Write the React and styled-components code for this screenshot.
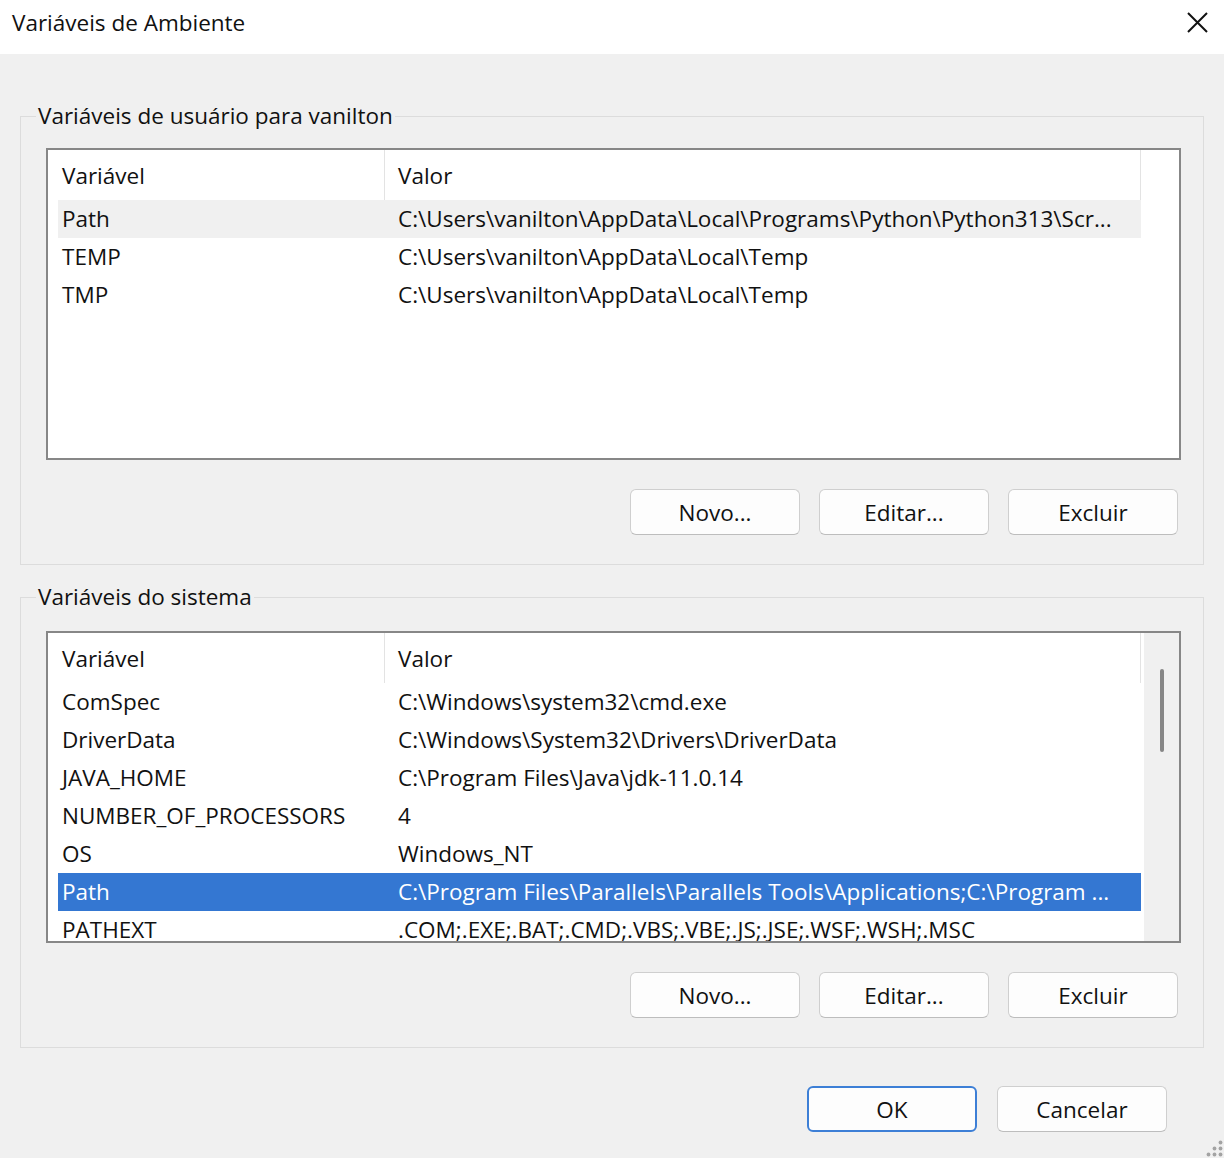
import React from 'react';
import styled, { createGlobalStyle } from 'styled-components';

const FONT = `"Open Sans", "Noto Sans", "Liberation Sans", sans-serif`;
const FS = '22.5px';
const INK = '#111111';

const GlobalStyle = createGlobalStyle`
  html, body { margin: 0; padding: 0; }
  body { background: #f0f0f0; font-family: ${FONT}; color: ${INK}; }
  * { box-sizing: border-box; }
`;

const Window = styled.div`
  position: relative;
  width: 1224px;
  height: 1158px;
  background: #f0f0f0;
  display: flex;
  flex-direction: column;
  overflow: hidden;
`;

const TitleBar = styled.div`
  height: 54px;
  flex-shrink: 0;
  background: #ffffff;
  display: flex;
  align-items: flex-start;
  justify-content: space-between;
  padding: 0 16px 0 12px;
`;

const Title = styled.div`
  font-size: ${FS};
  line-height: 30px;
  margin-top: 8px;
`;

const CloseButton = styled.button`
  margin-top: 12px;
  width: 21px;
  height: 21px;
  padding: 0;
  border: none;
  background: transparent;
  display: flex;
  color: ${INK};
`;

const Content = styled.div`
  flex: 1;
  display: flex;
  flex-direction: column;
  padding: 47px 20px 0 20px;
`;

const Group = styled.fieldset`
  margin: ${(p) => (p.$first ? '0' : '17px 0 0 0')};
  padding: ${(p) => (p.$first ? '17px' : '19px')} 22px 29px 25px;
  border: 1px solid #dcdcdc;
  min-width: 0;
  display: flex;
  flex-direction: column;
  gap: 29px;
`;

const Legend = styled.legend`
  font-size: ${FS};
  line-height: 30px;
  padding: 0 2px;
  margin-left: -10px;
`;

const ListBox = styled.div`
  height: 312px;
  border: 2px solid #878787;
  background: #ffffff;
  display: flex;
  overflow: hidden;
`;

const ListView = styled.div`
  flex: 1;
  min-width: 0;
  padding-left: 10px;
  display: flex;
  flex-direction: column;
  overflow: hidden;
`;

const HeaderRow = styled.div`
  width: 1083px;
  height: 50px;
  flex-shrink: 0;
  display: grid;
  grid-template-columns: 327px 1fr;
  border-right: 1px solid #e3e3e3;
`;

const HeaderCell = styled.div`
  display: flex;
  align-items: center;
  font-size: ${FS};
  padding-left: ${(p) => (p.$second ? '13px' : '4px')};
  border-right: ${(p) => (p.$second ? 'none' : '1px solid #e3e3e3')};
`;

const Row = styled.div`
  width: 1083px;
  height: 38px;
  flex-shrink: 0;
  display: grid;
  grid-template-columns: 327px 1fr;
  align-items: center;
  background: ${(p) => (p.$selected ? '#3477d2' : p.$hover ? '#f0f0f0' : 'transparent')};
  color: ${(p) => (p.$selected ? '#ffffff' : INK)};
`;

const Cell = styled.div`
  font-size: ${FS};
  line-height: 38px;
  white-space: nowrap;
  overflow: hidden;
  text-overflow: ellipsis;
  padding-left: ${(p) => (p.$second ? '13px' : '4px')};
`;

const ScrollTrack = styled.div`
  width: 35px;
  flex-shrink: 0;
  background: #f0f0f0;
  display: flex;
  flex-direction: column;
  align-items: center;
  padding-top: 36px;
`;

const ScrollThumb = styled.div`
  width: 4px;
  height: 83px;
  border-radius: 2px;
  background: #868686;
`;

const ButtonRow = styled.div`
  display: flex;
  justify-content: flex-end;
  gap: 19px;
  padding-right: 3px;
`;

const Button = styled.button`
  width: 170px;
  height: 46px;
  border-radius: 6px;
  background: #fdfdfd;
  border: ${(p) => (p.$default ? '2px solid #3d7fd6' : '1px solid #cfcfcf')};
  border-bottom-color: ${(p) => (p.$default ? '#3d7fd6' : '#bdbdbd')};
  font-family: ${FONT};
  font-size: ${FS};
  color: ${INK};
  padding: 0;
  display: flex;
  align-items: center;
  justify-content: center;
`;

const Footer = styled.div`
  display: flex;
  justify-content: flex-end;
  gap: 20px;
  padding: 38px 37px 0 0;
`;

const Grip = styled.svg`
  position: absolute;
  right: 1px;
  bottom: 1px;
`;

const userVars = [
  ['Path', 'C:\\Users\\vanilton\\AppData\\Local\\Programs\\Python\\Python313\\Scr...'],
  ['TEMP', 'C:\\Users\\vanilton\\AppData\\Local\\Temp'],
  ['TMP', 'C:\\Users\\vanilton\\AppData\\Local\\Temp'],
];

const sysVars = [
  ['ComSpec', 'C:\\Windows\\system32\\cmd.exe'],
  ['DriverData', 'C:\\Windows\\System32\\Drivers\\DriverData'],
  ['JAVA_HOME', 'C:\\Program Files\\Java\\jdk-11.0.14'],
  ['NUMBER_OF_PROCESSORS', '4'],
  ['OS', 'Windows_NT'],
  ['Path', 'C:\\Program Files\\Parallels\\Parallels Tools\\Applications;C:\\Program ...'],
  ['PATHEXT', '.COM;.EXE;.BAT;.CMD;.VBS;.VBE;.JS;.JSE;.WSF;.WSH;.MSC'],
];

function VarList({ rows, selected, hover, scroll }) {
  return (
    <ListBox>
      <ListView>
        <HeaderRow>
          <HeaderCell>Variável</HeaderCell>
          <HeaderCell $second>Valor</HeaderCell>
        </HeaderRow>
        {rows.map(([k, v], i) => (
          <Row key={k + i} $selected={i === selected} $hover={i === hover}>
            <Cell>{k}</Cell>
            <Cell $second>{v}</Cell>
          </Row>
        ))}
      </ListView>
      {scroll && (
        <ScrollTrack>
          <ScrollThumb />
        </ScrollTrack>
      )}
    </ListBox>
  );
}

function Actions() {
  return (
    <ButtonRow>
      <Button>Novo...</Button>
      <Button>Editar...</Button>
      <Button>Excluir</Button>
    </ButtonRow>
  );
}

export default function App() {
  return (
    <Window>
      <GlobalStyle />
      <TitleBar>
        <Title>Variáveis de Ambiente</Title>
        <CloseButton aria-label="Fechar">
          <svg width="21" height="21" viewBox="0 0 21 21">
            <path d="M1 1 L20 20 M20 1 L1 20" stroke={INK} strokeWidth="2" fill="none" />
          </svg>
        </CloseButton>
      </TitleBar>
      <Content>
        <Group $first>
          <Legend>Variáveis de usuário para vanilton</Legend>
          <VarList rows={userVars} hover={0} />
          <Actions />
        </Group>
        <Group>
          <Legend>Variáveis do sistema</Legend>
          <VarList rows={sysVars} selected={5} scroll />
          <Actions />
        </Group>
        <Footer>
          <Button $default>OK</Button>
          <Button>Cancelar</Button>
        </Footer>
      </Content>
      <Grip width="18" height="18" viewBox="0 0 18 18">
        {[
          [15.5, 3.5],
          [9.5, 9.5], [15.5, 9.5],
          [3.5, 15.5], [9.5, 15.5], [15.5, 15.5],
        ].map(([x, y]) => (
          <circle key={`${x}-${y}`} cx={x} cy={y} r="1.9" fill="#a3a3a3" />
        ))}
      </Grip>
    </Window>
  );
}
